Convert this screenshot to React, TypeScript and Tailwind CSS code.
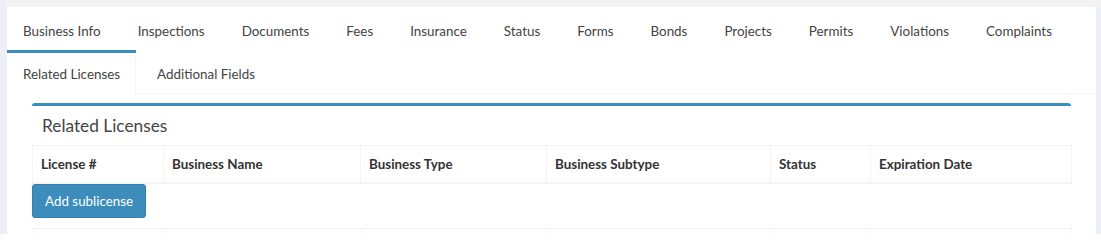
import React from 'react';

const FONT = { fontFamily: '"Source Sans Pro", Lato, "Noto Sans", sans-serif' };

const topTabs = [
  'Business Info',
  'Inspections',
  'Documents',
  'Fees',
  'Insurance',
  'Status',
  'Forms',
  'Bonds',
  'Projects',
  'Permits',
  'Violations',
  'Complaints',
];

const columns = [
  { label: 'License #', w: 'w-[131px]' },
  { label: 'Business Name', w: 'w-[197px]' },
  { label: 'Business Type', w: 'w-[186px]' },
  { label: 'Business Subtype', w: 'w-[224px]' },
  { label: 'Status', w: 'w-[100px]' },
  { label: 'Expiration Date', w: 'w-[201px]' },
];

function Tab({ label, active = false }: { label: string; active?: boolean }) {
  return (
    <li
      className={
        active
          ? 'relative -mb-px mr-[5px] border-t-[3px] border-[#3c8dbc] bg-white'
          : 'mr-[5px] border-t-[3px] border-transparent'
      }
    >
      <a
        className={
          active
            ? 'block whitespace-nowrap border-r border-b border-[#f4f4f4] border-b-white pl-4 pr-[15px] pt-[11px] pb-[9px] text-[13.4px] leading-5 text-[#444]'
            : 'block whitespace-nowrap border-x border-transparent px-[15px] pt-[11px] pb-[9px] text-[13.4px] leading-5 text-[#444]'
        }
      >
        {label}
      </a>
    </li>
  );
}

export default function App() {
  return (
    <div className="h-[234px] overflow-hidden bg-[#ecf0f5] pl-[7px]" style={FONT}>
      <div className="h-[7px] bg-[#f2f2f2]" />
      <div className="mr-[5px] rounded-tr-[3px] bg-white">
        <ul className="flex">
          {topTabs.map((t) => (
            <Tab key={t} label={t} />
          ))}
        </ul>
        <ul className="flex border-b border-[#f4f4f4]">
          <Tab label="Related Licenses" active />
          <Tab label="Additional Fields" />
        </ul>

        <div className="px-[25px] pt-[9px] pb-4">
          <div className="rounded-[3px] border-t-[3px] border-[#3c8dbc] bg-white shadow-[0_1px_1px_rgba(0,0,0,0.1)]">
            <div className="px-[10px] pt-[10px] pb-[9px]">
              <h3 className="text-[17.3px] leading-5 font-normal text-[#444]">Related Licenses</h3>
            </div>
            <table className="w-full table-fixed border-collapse text-[13.4px] leading-5 text-[#333]">
              <thead>
                <tr>
                  {columns.map((c) => (
                    <th
                      key={c.label}
                      className={`${c.w} whitespace-nowrap border border-b-2 border-[#f4f4f4] p-2 text-left font-bold`}
                    >
                      {c.label}
                    </th>
                  ))}
                </tr>
              </thead>
            </table>
            <button className="mb-[10px] block rounded-[3px] border border-[#367fa9] bg-[#3c8dbc] px-3 py-[6px] text-[13.4px] leading-5 text-white">
              Add sublicense
            </button>
            <table className="w-full table-fixed border-collapse text-[13.4px] leading-5 text-[#333]">
              <tbody>
                <tr>
                  {columns.map((c) => (
                    <td key={c.label} className={`${c.w} border border-[#f4f4f4] p-2`}>
                      &nbsp;
                    </td>
                  ))}
                </tr>
              </tbody>
            </table>
          </div>
        </div>
      </div>
    </div>
  );
}
